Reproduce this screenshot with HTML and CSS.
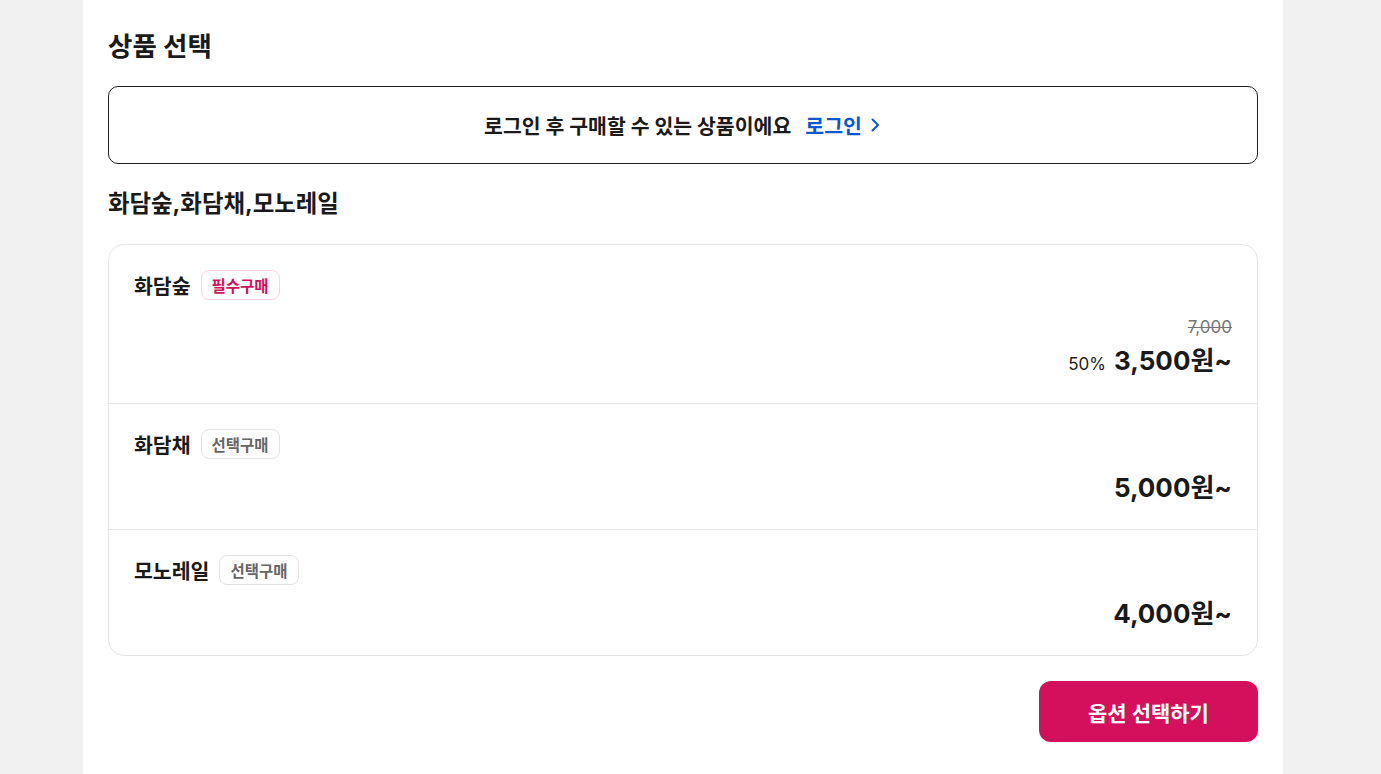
FILE: index.html
```html
<!DOCTYPE html>
<html lang="ko">
<head>
<meta charset="utf-8">
<link rel="stylesheet" href="styles.css">
</head>
<body>
<div class="page">
  <main class="panel">
    <h2 class="title">상품 선택</h2>
    <div class="login-box">
      <span class="login-msg">로그인 후 구매할 수 있는 상품이에요</span>
      <a class="login-link">로그인
        <svg width="14" height="16" viewBox="0 0 14 16"><path d="M4.5 2.5 L10 8 L4.5 13.5" fill="none" stroke="#0b57d0" stroke-width="2" stroke-linecap="round" stroke-linejoin="round"/></svg>
      </a>
    </div>
    <h3 class="subtitle">화담숲,화담채,모노레일</h3>
    <ul class="list">
      <li class="item">
        <div class="item-head">
          <span class="name">화담숲</span>
          <span class="badge badge-req">필수구매</span>
        </div>
        <div class="price-area">
          <span class="orig">7,000</span>
          <div class="price-line">
            <span class="rate">50%</span>
            <span class="price">3,500원~</span>
          </div>
        </div>
      </li>
      <li class="item">
        <div class="item-head">
          <span class="name">화담채</span>
          <span class="badge">선택구매</span>
        </div>
        <div class="price-area">
          <div class="price-line">
            <span class="price">5,000원~</span>
          </div>
        </div>
      </li>
      <li class="item">
        <div class="item-head">
          <span class="name">모노레일</span>
          <span class="badge">선택구매</span>
        </div>
        <div class="price-area">
          <div class="price-line">
            <span class="price">4,000원~</span>
          </div>
        </div>
      </li>
    </ul>
    <div class="actions">
      <button class="btn">옵션 선택하기</button>
    </div>
  </main>
</div>
</body>
</html>
```

FILE: styles.css
```css
* { box-sizing: border-box; }
html, body { margin: 0; padding: 0; }
body {
  background: #f1f1f1;
  font-family: "Inter", "Noto Sans CJK KR", sans-serif;
  color: #1a1a1a;
}
.page {
  display: flex;
  justify-content: flex-start;
  padding-left: 83px;
  min-height: 774px;
}
.panel {
  width: 1200px;
  background: #fff;
  padding: 27px 25px 40px;
  min-height: 774px;
}
.title {
  margin: 0;
  font-size: 26.5px;
  font-weight: 700;
  line-height: 38px;
}
.login-box {
  margin-top: 21px;
  height: 78px;
  border: 1px solid #1f1f1f;
  border-radius: 10px;
  display: flex;
  align-items: center;
  justify-content: center;
  gap: 14px;
  font-size: 20.5px;
  font-weight: 700;
}
.login-link {
  color: #0b57d0;
  display: inline-flex;
  align-items: center;
  gap: 6px;
}
.subtitle {
  margin: 24px 0 0;
  font-size: 23.4px;
  font-weight: 700;
  line-height: 32px;
}
.list {
  list-style: none;
  margin: 24px 0 0;
  padding: 0;
  border: 1px solid #e6e6e6;
  border-radius: 16px;
}
.item {
  padding: 25px 25px 24px;
  border-top: 1px solid #e6e6e6;
}
.item:first-child { border-top: none; padding-bottom: 25px; }
.item-head {
  display: flex;
  align-items: center;
  gap: 10px;
  height: 30px;
}
.name {
  font-size: 20.5px;
  font-weight: 700;
}
.badge {
  display: inline-flex;
  align-items: center;
  height: 30px;
  padding: 0 10px;
  border: 1px solid #e3e3e3;
  border-radius: 8px;
  font-size: 15.5px;
  font-weight: 700;
  color: #666;
}
.badge-req {
  border-color: #fbd3e2;
  color: #d40f5b;
}
.price-area {
  display: flex;
  flex-direction: column;
  align-items: flex-end;
  margin-top: 12px;
}
.orig {
  font-size: 17px;
  color: #777;
  text-decoration: line-through;
  line-height: 24px;
  margin-top: 3px;
  margin-bottom: 5px;
}
.price-line {
  display: flex;
  align-items: baseline;
  gap: 8px;
}
.rate {
  font-size: 17px;
  color: #222;
}
.price {
  font-size: 26px;
  font-weight: 700;
  line-height: 34px;
  color: #1a1a1a;
}
.actions {
  display: flex;
  justify-content: flex-end;
  margin-top: 25px;
}
.btn {
  width: 219px;
  height: 61px;
  border: none;
  border-radius: 12px;
  background: #d40f5b;
  color: #fff;
  font-family: "Inter", "Noto Sans CJK KR", sans-serif;
  font-size: 21px;
  font-weight: 700;
}
```
